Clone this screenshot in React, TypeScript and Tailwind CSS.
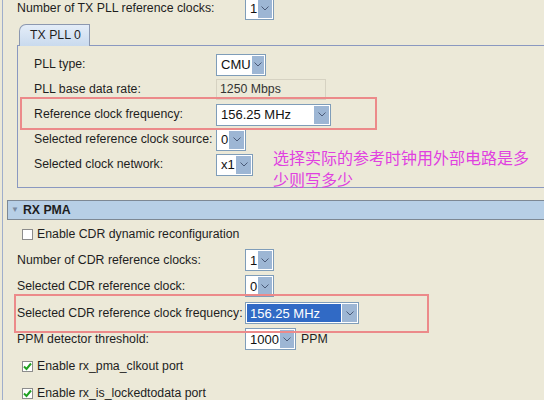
import React from 'react';

const font = "font-['Liberation_Sans','Arial',sans-serif]";

function Chevron() {
  return (
    <svg width="8" height="5" viewBox="0 0 8 5" className="block">
      <path d="M0.5 0.5 L4 4 L7.5 0.5" fill="none" stroke="#4A5A78" strokeWidth="1" />
    </svg>
  );
}

function Combo({ value, width, selected = false }: { value: string; width: number; selected?: boolean }) {
  return (
    <div
      className="flex h-[22px] shrink-0 border border-[#7F9DB9] bg-white p-px"
      style={{ width }}
    >
      <span
        className={`flex-1 flex items-center pl-[3px] text-[13px] leading-none whitespace-nowrap ${
          selected ? 'bg-[#316AC5] text-white' : 'text-[#111]'
        }`}
      >
        {value}
      </span>
      <span className="w-[15px] flex items-center justify-center bg-[#9DB6D4] ml-px">
        <Chevron />
      </span>
    </div>
  );
}

function Check({ checked }: { checked: boolean }) {
  return (
    <span className="w-[11px] h-[11px] shrink-0 border border-[#8C8C8C] bg-white flex items-center justify-center">
      {checked && (
        <svg width="9" height="9" viewBox="0 0 9 9">
          <path d="M1 4.5 L3.5 7 L8 1.5" fill="none" stroke="#21A121" strokeWidth="2" />
        </svg>
      )}
    </span>
  );
}

export default function App() {
  return (
    <div className={`relative w-[544px] h-[400px] overflow-hidden bg-[#ECE9D8] text-[12.3px] text-[#1E1E1E] ${font}`}>
      <div className="ml-[2px] h-full border-l border-[#9FAECB] flex flex-col">
        {/* TX PLL reference clock count */}
        <div className="mt-[-2px] h-[21px] flex items-center pl-[14px] shrink-0">
          <span className="w-[228px] shrink-0 whitespace-nowrap">Number of TX PLL reference clocks:</span>
          <Combo value="1" width={29} />
        </div>

        {/* tab strip */}
        <div className="mt-[5px] pl-[16px] flex shrink-0">
          <div className="relative z-10 -mb-px h-[22px] w-[71px] border border-b-0 border-[#8C98B0] rounded-tl-[7px] bg-gradient-to-b from-[#E4EDF8] to-[#C9DAEE] flex items-center pl-[10px] whitespace-nowrap">
            TX PLL 0
          </div>
        </div>

        {/* TX PLL 0 panel */}
        <div className="ml-[14px] border-l border-t border-b border-[#8A98C0] pt-[6px] pb-[10px] shrink-0">
          <div className="h-[25px] flex items-center pl-[16px]">
            <span className="w-[182px] shrink-0 whitespace-nowrap">PLL type:</span>
            <Combo value="CMU" width={50} />
          </div>
          <div className="h-[25px] flex items-center pl-[16px]">
            <span className="w-[182px] shrink-0 whitespace-nowrap">PLL base data rate:</span>
            <span className="h-[21px] w-[110px] border border-[#D6D2C2] flex items-center pl-[3px] text-[#333]">
              1250 Mbps
            </span>
          </div>
          <div className="h-[25px] flex items-center pl-[16px]">
            <span className="w-[182px] shrink-0 whitespace-nowrap">Reference clock frequency:</span>
            <Combo value="156.25 MHz" width={115} />
          </div>
          <div className="h-[25px] flex items-center pl-[16px]">
            <span className="w-[182px] shrink-0 whitespace-nowrap">Selected reference clock source:</span>
            <Combo value="0" width={30} />
          </div>
          <div className="h-[25px] flex items-center pl-[16px]">
            <span className="w-[182px] shrink-0 whitespace-nowrap">Selected clock network:</span>
            <Combo value="x1" width={37} />
          </div>
        </div>

        {/* RX PMA header */}
        <div className="mt-[12px] ml-[4px] h-[20px] border-t border-l border-b border-[#7D8894] bg-[#B7CFE6] flex items-center shrink-0">
          <span className="ml-[3px] text-[8px] text-[#7A8AA0] leading-none">▼</span>
          <span className="ml-[4px] font-bold">RX PMA</span>
        </div>

        <div className="mt-[2px] h-[25px] flex items-center pl-[19px] gap-[4px] shrink-0">
          <Check checked={false} />
          <span className="whitespace-nowrap">Enable CDR dynamic reconfiguration</span>
        </div>
        <div className="h-[26px] flex items-center pl-[14px] shrink-0">
          <span className="w-[228px] shrink-0 whitespace-nowrap">Number of CDR reference clocks:</span>
          <Combo value="1" width={29} />
        </div>
        <div className="h-[26px] flex items-center pl-[14px] shrink-0">
          <span className="w-[228px] shrink-0 whitespace-nowrap">Selected CDR reference clock:</span>
          <Combo value="0" width={29} />
        </div>
        <div className="h-[28px] flex items-center pl-[14px] shrink-0">
          <span className="w-[228px] shrink-0 whitespace-nowrap">Selected CDR reference clock frequency:</span>
          <Combo value="156.25 MHz" width={114} selected />
        </div>
        <div className="h-[24px] flex items-center pl-[14px] shrink-0">
          <span className="w-[228px] shrink-0 whitespace-nowrap">PPM detector threshold:</span>
          <Combo value="1000" width={51} />
          <span className="ml-[5px]">PPM</span>
        </div>
        <div className="mt-[2px] h-[27px] flex items-center pl-[19px] gap-[4px] shrink-0">
          <Check checked />
          <span className="whitespace-nowrap">Enable rx_pma_clkout port</span>
        </div>
        <div className="h-[27px] flex items-center pl-[19px] gap-[4px] shrink-0">
          <Check checked />
          <span className="whitespace-nowrap">Enable rx_is_lockedtodata port</span>
        </div>
      </div>

      {/* annotations */}
      <div className="absolute left-[20px] top-[97px] w-[357px] h-[33px] border-2 border-[#EC8A8A]" />
      <div className="absolute left-[14px] top-[294px] w-[415px] h-[39px] border-2 border-[#EC8A8A]" />
      <div className="absolute left-[273px] top-[146px] text-[16px] leading-[22px] text-[#E040E0] font-['Noto_Sans_CJK_SC',sans-serif]">
        选择实际的参考时钟用外部电路是多
        <br />
        少则写多少
      </div>
    </div>
  );
}
